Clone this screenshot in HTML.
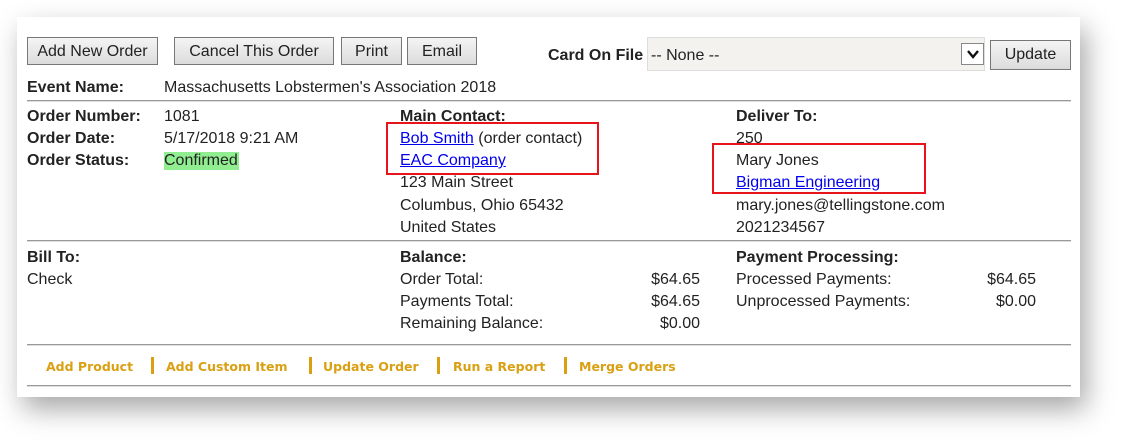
<!DOCTYPE html><html><head><style>
body{margin:0;width:1129px;height:445px;background:#fff;position:relative;overflow:hidden;font-family:"Liberation Sans",Arial,sans-serif;font-size:16px;color:#222}
#p{position:absolute;left:17px;top:17px;width:1063px;height:380px;background:#fff;box-shadow:6px 12px 26px rgba(0,0,0,.35)}
.a{position:absolute;white-space:nowrap;line-height:18px;margin-top:2px}
.b{font-weight:bold}
.btn{position:absolute;top:37px;height:28px;border:1px solid #777;background:linear-gradient(#f4f4f4,#dcdcdc);box-sizing:border-box;text-align:center;line-height:27px;font-size:16px;color:#222}
.hr{position:absolute;left:27px;width:1044px;height:0;border-top:1px solid #999;border-bottom:1px solid #ddd}
a{color:#00e;text-decoration:underline}
.r{text-align:right}
.lk{position:absolute;top:359px;font-family:"DejaVu Sans",sans-serif;font-weight:bold;font-size:12.5px;color:#d9a012;white-space:nowrap;line-height:16px}
.sep{position:absolute;top:357px;width:3px;height:17px;background:#d9a012}
.red{position:absolute;border:2px solid #e8141b}
</style></head><body>
<div id="p"></div>
<div class="btn" style="left:27px;width:131px">Add New Order</div>
<div class="btn" style="left:174px;width:160px">Cancel This Order</div>
<div class="btn" style="left:341px;width:61px">Print</div>
<div class="btn" style="left:407px;width:70px">Email</div>
<div class="a b" style="left:548px;top:45px">Card On File</div>
<div style="position:absolute;left:647px;top:37px;width:338px;height:34px;background:#f3f2ee;border:1px solid #ddd;box-sizing:border-box"></div>
<div class="a" style="left:651px;top:45px">-- None --</div>
<div style="position:absolute;left:961px;top:43px;width:23px;height:22px;border:1px solid #888;background:#fff;box-sizing:border-box;text-align:center">
<svg width="14" height="14" viewBox="0 0 14 14" style="margin-top:3px"><path d="M2 4 L7 10 L12 4" stroke="#111" stroke-width="2.4" fill="none"/></svg></div>
<div class="btn" style="left:990px;top:40px;width:81px;height:30px;line-height:28px">Update</div>

<div class="a b" style="left:27px;top:77px">Event Name:</div>
<div class="a" style="left:164px;top:77px">Massachusetts Lobstermen's Association 2018</div>
<div class="hr" style="top:100px"></div>

<div class="a b" style="left:27px;top:106px">Order Number:</div>
<div class="a" style="left:164px;top:106px">1081</div>
<div class="a b" style="left:27px;top:128px">Order Date:</div>
<div class="a" style="left:164px;top:128px">5/17/2018 9:21 AM</div>
<div class="a b" style="left:27px;top:150px">Order Status:</div>
<div class="a" style="left:164px;top:150px;background:#90ee90;padding-right:1px">Confirmed</div>

<div class="a b" style="left:400px;top:106px">Main Contact:</div>
<div class="a" style="left:400px;top:128px"><a>Bob Smith</a> (order contact)</div>
<div class="a" style="left:400px;top:150px"><a>EAC Company</a></div>
<div class="a" style="left:400px;top:172px">123 Main Street</div>
<div class="a" style="left:400px;top:195px">Columbus, Ohio 65432</div>
<div class="a" style="left:400px;top:217px">United States</div>

<div class="a b" style="left:736px;top:106px">Deliver To:</div>
<div class="a" style="left:736px;top:128px">250</div>
<div class="a" style="left:736px;top:150px">Mary Jones</div>
<div class="a" style="left:736px;top:172px"><a>Bigman Engineering</a></div>
<div class="a" style="left:736px;top:195px">mary.jones@tellingstone.com</div>
<div class="a" style="left:736px;top:217px">2021234567</div>

<div class="red" style="left:386px;top:122px;width:209px;height:49px"></div>
<div class="red" style="left:712px;top:143px;width:210px;height:47px"></div>

<div class="hr" style="top:240px"></div>
<div class="a b" style="left:27px;top:247px">Bill To:</div>
<div class="a" style="left:27px;top:269px">Check</div>
<div class="a b" style="left:400px;top:247px">Balance:</div>
<div class="a" style="left:400px;top:269px">Order Total:</div>
<div class="a" style="left:400px;top:291px">Payments Total:</div>
<div class="a" style="left:400px;top:313px">Remaining Balance:</div>
<div class="a r" style="right:429px;top:269px">$64.65</div>
<div class="a r" style="right:429px;top:291px">$64.65</div>
<div class="a r" style="right:429px;top:313px">$0.00</div>
<div class="a b" style="left:736px;top:247px">Payment Processing:</div>
<div class="a" style="left:736px;top:269px">Processed Payments:</div>
<div class="a" style="left:736px;top:291px">Unprocessed Payments:</div>
<div class="a r" style="right:93px;top:269px">$64.65</div>
<div class="a r" style="right:93px;top:291px">$0.00</div>

<div class="hr" style="top:344px"></div>
<div class="lk" style="left:46px">Add Product</div>
<div class="sep" style="left:151px"></div>
<div class="lk" style="left:166px">Add Custom Item</div>
<div class="sep" style="left:309px"></div>
<div class="lk" style="left:323px">Update Order</div>
<div class="sep" style="left:437px"></div>
<div class="lk" style="left:453px">Run a Report</div>
<div class="sep" style="left:564px"></div>
<div class="lk" style="left:579px">Merge Orders</div>
<div class="hr" style="top:385px"></div>
</body></html>
